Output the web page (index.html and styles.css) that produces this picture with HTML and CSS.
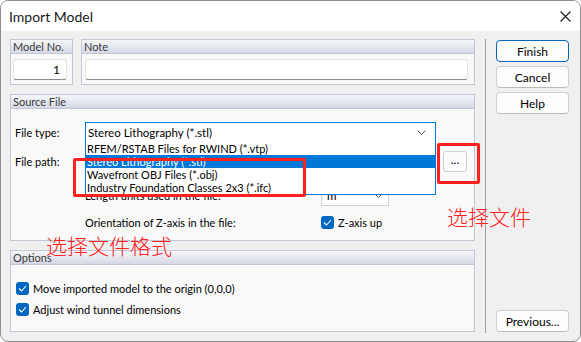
FILE: index.html
```html
<!DOCTYPE html>
<html lang="en">
<head>
  <meta charset="UTF-8" />
  <meta name="viewport" content="width=device-width, initial-scale=1.0"/>
  <title>Import Model</title>
  <link rel="stylesheet" href="styles.css">
</head>
<body>

  <div class="window">
    <div class="titlebar">
      <span class="title">Import Model</span>
      <svg class="close" width="11" height="11" viewBox="0 0 11 11">
        <path d="M0.5 0.5 L10.5 10.5 M10.5 0.5 L0.5 10.5" stroke="#1b1b1b" stroke-width="1.1" fill="none"/>
      </svg>
    </div>

    <div class="client">
      <div class="main">
        <div class="top-row">
          <div class="group model-group">
            <div class="group-head">Model No.</div>
            <div class="group-body">
              <div class="field num">1</div>
            </div>
          </div>
          <div class="group note-group">
            <div class="group-head">Note</div>
            <div class="group-body">
              <div class="field"></div>
            </div>
          </div>
        </div>

        <div class="group source-group">
          <div class="group-head">Source File</div>
          <div class="group-body source-body">
            <div class="row">
              <span class="label">File type:</span>
              <div class="select open">
                <span>Stereo Lithography (*.stl)</span>
                <svg class="chevron" width="9" height="5" viewBox="0 0 9 5">
                  <path d="M0.5 0.5 L4.5 4.5 L8.5 0.5" stroke="#555" stroke-width="1" fill="none"/>
                </svg>
                <ul class="dropdown">
                  <li>RFEM/RSTAB Files for RWIND (*.vtp)</li>
                  <li class="selected">Stereo Lithography (*.stl)</li>
                  <li>Wavefront OBJ Files (*.obj)</li>
                  <li>Industry Foundation Classes 2x3 (*.ifc)</li>
                </ul>
              </div>
            </div>
            <div class="row path-row">
              <span class="label">File path:</span>
              <div class="field path"></div>
              <button class="browse">...</button>
            </div>
            <div class="row sub-row units-row">
              <span class="sub-label">Length units used in the file:</span>
              <div class="select small">
                <span>m</span>
                <svg class="chevron" width="7" height="4" viewBox="0 0 7 4">
                  <path d="M0.5 0.5 L3.5 3.5 L6.5 0.5" stroke="#555" stroke-width="1" fill="none"/>
                </svg>
              </div>
            </div>
            <div class="row sub-row">
              <span class="sub-label">Orientation of Z-axis in the file:</span>
              <label class="check"><span class="box"><svg width="9" height="7" viewBox="0 0 9 7"><path d="M1 3.5 L3.5 6 L8 1" stroke="#fff" stroke-width="1.1" fill="none"/></svg></span>Z-axis up</label>
            </div>
          </div>
        </div>

        <div class="group options-group">
          <div class="group-head">Options</div>
          <div class="group-body options-body">
            <label class="check"><span class="box"><svg width="9" height="7" viewBox="0 0 9 7"><path d="M1 3.5 L3.5 6 L8 1" stroke="#fff" stroke-width="1.1" fill="none"/></svg></span>Move imported model to the origin (0,0,0)</label>
            <label class="check"><span class="box"><svg width="9" height="7" viewBox="0 0 9 7"><path d="M1 3.5 L3.5 6 L8 1" stroke="#fff" stroke-width="1.1" fill="none"/></svg></span>Adjust wind tunnel dimensions</label>
          </div>
        </div>
      </div>

      <div class="sep"></div>

      <div class="side">
        <button class="btn default">Finish</button>
        <button class="btn">Cancel</button>
        <button class="btn">Help</button>
        <button class="btn previous">Previous...</button>
      </div>
    </div>

    <!-- annotations drawn over the dialog -->
    <div class="mark mark-types"></div>
    <div class="mark mark-browse"></div>
    <span class="note-text note-browse">选择文件</span>
    <span class="note-text note-types">选择文件格式</span>
  </div>

</body>
</html>
```

FILE: styles.css
```css
body {
  margin: 0;
  padding: 0;
  background: #fff;
}

.window {
  position: relative;
  width: 579px;
  height: 340px;
  border: 1px solid #8f8f8f;
  border-radius: 8px;
  overflow: hidden;
  display: flex;
  flex-direction: column;
  background: #f0f0f0;
  font-family: "Segoe UI", Lato, "Noto Sans", sans-serif;
  font-size: 11px;
  color: #000;
}

.titlebar {
  height: 30px;
  flex: none;
  background: #fff;
  display: flex;
  align-items: center;
  justify-content: space-between;
  padding: 0 9px 0 8px;
}

.title {
  font-size: 14px;
  color: #1a1a1a;
}

.client {
  flex: 1;
  display: flex;
  padding: 8px 0 0 9px;
}

.main {
  width: 465px;
  display: flex;
  flex-direction: column;
  gap: 9px;
}

.top-row {
  display: flex;
  gap: 8px;
}

/* group boxes */
.group {
  border: 1px solid #c3c7d6;
  background: #f9f9f9;
  box-sizing: border-box;
}

.group-head {
  height: 13px;
  line-height: 13px;
  padding-left: 2px;
  background: linear-gradient(#f6f7fa, #d5d8e4);
  border-bottom: 1px solid #c3c7d6;
  color: #3a3a3a;
}

.model-group {
  width: 63px;
  height: 46px;
}

.note-group {
  flex: 1;
  height: 46px;
}

.model-group .group-body {
  padding: 5px 5px 0 2px;
}

.note-group .group-body {
  padding: 5px 6px 0 3px;
}

.field {
  height: 21px;
  box-sizing: border-box;
  background: #fff;
  border: 1px solid #e3e3e3;
  border-bottom-color: #8a8a8a;
  border-radius: 3px;
}

.field.num {
  text-align: right;
  padding-right: 6px;
  line-height: 19px;
  font-size: 12px;
}

.source-group {
  height: 147px;
}

.source-body {
  padding: 13px 0 0 4px;
}

.row {
  display: flex;
  align-items: center;
  height: 21px;
}

.path-row {
  margin-top: 8px;
}

.units-row {
  margin-top: 13px;
}

.units-row + .row {
  margin-top: 6px;
}

.label {
  width: 70px;
}

.sub-row {
  padding-left: 70px;
}

.sub-label {
  width: 236px;
}

.select {
  position: relative;
  width: 351px;
  height: 21px;
  box-sizing: border-box;
  background: #fff;
  border: 1px solid #d0d0d0;
  display: flex;
  align-items: center;
  justify-content: space-between;
  padding: 0 9px 0 2px;
  font-size: 11.5px;
}

.select.open {
  border-color: #0078d7;
}

.select.small {
  width: 68px;
  padding: 0 6px 0 5px;
}

.field.path {
  width: 351px;
}

.browse {
  margin-left: 7px;
  width: 24px;
  height: 21px;
  padding: 0 0 4px;
  background: #fbfbfb;
  border: 1px solid #cfcfcf;
  border-radius: 3px;
  font: inherit;
  font-size: 12px;
  color: #000;
}

/* open list of the file type box */
.dropdown {
  position: absolute;
  z-index: 5;
  top: 100%;
  left: -1px;
  width: 351px;
  box-sizing: border-box;
  margin: 0;
  padding: 0;
  list-style: none;
  background: #fff;
  border: 1px solid #0078d7;
  border-top: none;
  font-size: 11px;
}

.dropdown li {
  height: 13px;
  line-height: 13px;
  padding-left: 1px;
  white-space: nowrap;
}

.dropdown li.selected {
  background: #0078d7;
  color: #fff;
}

.check {
  display: flex;
  align-items: center;
  gap: 4px;
  height: 21px;
}

.box {
  width: 13px;
  height: 13px;
  border-radius: 3px;
  background: #0067c0;
  display: flex;
  align-items: center;
  justify-content: center;
}

.options-group {
  height: 82px;
}

.options-body {
  padding: 13px 0 0 5px;
}

.sep {
  width: 1px;
  height: 294px;
  background: #a0a0a0;
  margin: 0 10px;
}

.side {
  width: 73px;
  display: flex;
  flex-direction: column;
  gap: 4px;
  padding: 1px 0 9px;
}

.btn {
  height: 22px;
  padding: 0;
  background: #fdfdfd;
  border: 1px solid #d0d0d0;
  border-bottom-color: #bcbcbc;
  border-radius: 4px;
  font: inherit;
  font-size: 12px;
  color: #000;
}

.btn.default {
  border-color: #0067c0;
}

.btn.previous {
  margin-top: auto;
}

/* red annotation marks */
.mark {
  position: absolute;
  z-index: 10;
  box-sizing: border-box;
  border: 3px solid #ff2020;
  border-radius: 2px;
}

.mark-types {
  left: 72px;
  top: 157px;
  width: 233px;
  height: 39px;
}

.mark-browse {
  left: 436px;
  top: 142px;
  width: 43px;
  height: 41px;
}

.note-text {
  position: absolute;
  z-index: 10;
  color: #ff2020;
  font-family: "Noto Sans CJK SC", sans-serif;
  font-weight: 300;
  font-size: 21px;
  line-height: 1;
}

.note-browse {
  left: 446px;
  top: 205px;
}

.note-types {
  left: 45px;
  top: 234px;
}
```
